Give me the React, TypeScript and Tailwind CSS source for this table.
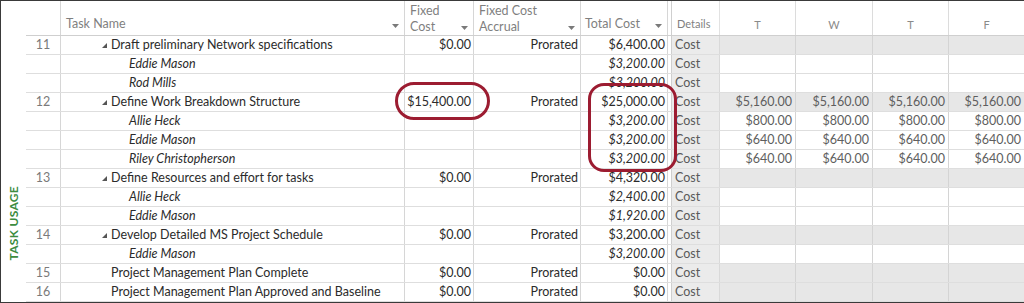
import React from 'react';

type Kind = 'summary' | 'assign' | 'milestone';

interface TaskRow {
    id?: number;
    kind: Kind;
    name: string;
    fixed?: string;
    accrual?: string;
    total: string;
    days?: string[];
}

const rows: TaskRow[] = [
    { id: 11, kind: 'summary', name: 'Draft preliminary Network specifications', fixed: '$0.00', accrual: 'Prorated', total: '$6,400.00' },
    { kind: 'assign', name: 'Eddie Mason', total: '$3,200.00' },
    { kind: 'assign', name: 'Rod Mills', total: '$3,200.00' },
    { id: 12, kind: 'summary', name: 'Define Work Breakdown Structure', fixed: '$15,400.00', accrual: 'Prorated', total: '$25,000.00', days: ['$5,160.00', '$5,160.00', '$5,160.00', '$5,160.00'] },
    { kind: 'assign', name: 'Allie Heck', total: '$3,200.00', days: ['$800.00', '$800.00', '$800.00', '$800.00'] },
    { kind: 'assign', name: 'Eddie Mason', total: '$3,200.00', days: ['$640.00', '$640.00', '$640.00', '$640.00'] },
    { kind: 'assign', name: 'Riley Christopherson', total: '$3,200.00', days: ['$640.00', '$640.00', '$640.00', '$640.00'] },
    { id: 13, kind: 'summary', name: 'Define Resources and effort for tasks', fixed: '$0.00', accrual: 'Prorated', total: '$4,320.00' },
    { kind: 'assign', name: 'Allie Heck', total: '$2,400.00' },
    { kind: 'assign', name: 'Eddie Mason', total: '$1,920.00' },
    { id: 14, kind: 'summary', name: 'Develop Detailed MS Project Schedule', fixed: '$0.00', accrual: 'Prorated', total: '$3,200.00' },
    { kind: 'assign', name: 'Eddie Mason', total: '$3,200.00' },
    { id: 15, kind: 'milestone', name: 'Project Management Plan Complete', fixed: '$0.00', accrual: 'Prorated', total: '$0.00' },
    { id: 16, kind: 'milestone', name: 'Project Management Plan Approved and Baseline', fixed: '$0.00', accrual: 'Prorated', total: '$0.00' },
];

const DropArrow = () => (
    <svg width="7" height="4" viewBox="0 0 7 4" className="shrink-0 mb-[5px]">
        <polygon points="0,0 7,0 3.5,4" fill="#7a7a7a" />
    </svg>
);

const Collapse = () => (
    <svg width="5" height="5" viewBox="0 0 5 5" className="shrink-0 mr-[4px]">
        <polygon points="5,0 5,5 0,5" fill="#555" />
    </svg>
);

export default function App() {
    return (
        <div className="relative w-[1024px] h-[303px] bg-white overflow-hidden font-['Lato','Liberation_Sans',sans-serif] text-[12.5px] text-[#2b2b2b]">
            <div className="flex h-[303px] border-t border-l border-b border-[#3a3a3a]">
                {/* side label */}
                <div className="w-[25px] shrink-0 flex flex-col items-center justify-end pb-[42px]">
                    <span className="[writing-mode:vertical-rl] rotate-180 font-bold text-[12px] tracking-[0.3px] text-[#3c8c3f] leading-none">
                        TASK USAGE
                    </span>
                </div>

                <div className="flex-1 flex flex-col">
                    {/* header */}
                    <div className="flex h-[35px] border-b border-[#cfcfcf] text-[#7f7f7f] leading-[16px] shrink-0">
                        <div className="w-[35px] border-r border-[#d6d6d6]" />
                        <div className="w-[344px] border-r border-[#d6d6d6] flex items-end justify-between pl-[5px] pr-[5px] pb-[2px]">
                            <span className="mb-[1px]">Task Name</span>
                            <DropArrow />
                        </div>
                        <div className="w-[69px] border-r border-[#d6d6d6] flex items-end justify-between pl-[5px] pr-[5px] pb-[0px]">
                            <span>Fixed<br />Cost</span>
                            <DropArrow />
                        </div>
                        <div className="w-[107px] border-r border-[#d6d6d6] flex items-end justify-between pl-[5px] pr-[5px] pb-[0px]">
                            <span>Fixed Cost<br />Accrual</span>
                            <DropArrow />
                        </div>
                        <div className="w-[87px] border-r border-[#d6d6d6] flex items-end justify-between pl-[4px] pr-[5px] pb-[2px]">
                            <span className="mb-[1px]">Total Cost</span>
                            <DropArrow />
                        </div>
                        <div className="w-[4px] border-r border-[#cfcfcf]" />
                        <div className="w-[48px] border-r border-[#e2e2e2] flex items-end pl-[5px] pb-[3px] text-[11px]">Details</div>
                        {['T', 'W', 'T', 'F'].map((d, i) => (
                            <div
                                key={i}
                                className={`${i === 1 ? 'w-[77px]' : i === 3 ? 'flex-1' : 'w-[76px]'} ${i < 3 ? 'border-r border-[#dcdcdc]' : ''} flex items-end justify-center pb-[2px] text-[11px] text-[#8a8a8a]`}
                            >
                                {d}
                            </div>
                        ))}
                    </div>

                    {/* body rows */}
                    {rows.map((r, idx) => {
                        const italic = r.kind === 'assign';
                        const shaded = r.kind !== 'assign';
                        return (
                            <div key={idx} className="flex h-[19px] border-b border-[#dedede] leading-[18px] shrink-0">
                                <div className="w-[35px] border-r border-[#d6d6d6] text-center text-[#7a7a7a]">{r.id ?? ''}</div>
                                <div
                                    className={`w-[344px] border-r border-[#d6d6d6] flex items-center whitespace-nowrap overflow-hidden ${
                                        r.kind === 'summary' ? 'pl-[41px]' : r.kind === 'milestone' ? 'pl-[50px]' : 'pl-[68px] italic'
                                    }`}
                                >
                                    {r.kind === 'summary' && <Collapse />}
                                    {r.name}
                                </div>
                                <div className="w-[69px] border-r border-[#d6d6d6] text-right pr-[2px] whitespace-nowrap">{r.fixed ?? ''}</div>
                                <div className="w-[107px] border-r border-[#d6d6d6] text-right pr-[2px]">{r.accrual ?? ''}</div>
                                <div className={`w-[87px] border-r border-[#d6d6d6] text-right pr-[2px] whitespace-nowrap ${italic ? 'italic' : ''}`}>{r.total}</div>
                                <div className="w-[4px] border-r border-[#cfcfcf]" />
                                <div className="w-[48px] border-r border-[#d9d9d9] bg-[#ebebeb] pl-[3px] text-[#595959]">Cost</div>
                                {[0, 1, 2, 3].map((i) => (
                                    <div
                                        key={i}
                                        className={`${i === 1 ? 'w-[77px]' : i === 3 ? 'flex-1' : 'w-[76px]'} ${i < 3 ? 'border-r border-[#d4d4d4]' : ''} ${
                                            shaded ? 'bg-[#e7e7e7]' : 'bg-white'
                                        } text-right pr-[3px] text-[#5e5e5e] whitespace-nowrap overflow-hidden`}
                                    >
                                        {r.days ? r.days[i] : ''}
                                    </div>
                                ))}
                            </div>
                        );
                    })}
                </div>
            </div>

            {/* highlight callouts */}
            <div className="absolute left-[395px] top-[82px] w-[95px] h-[38px] rounded-[19px] border-[3px] border-[#9c1c31]" />
            <div className="absolute left-[588px] top-[83px] w-[89px] h-[89px] rounded-[16px] border-[3px] border-[#9c1c31]" />
        </div>
    );
}
